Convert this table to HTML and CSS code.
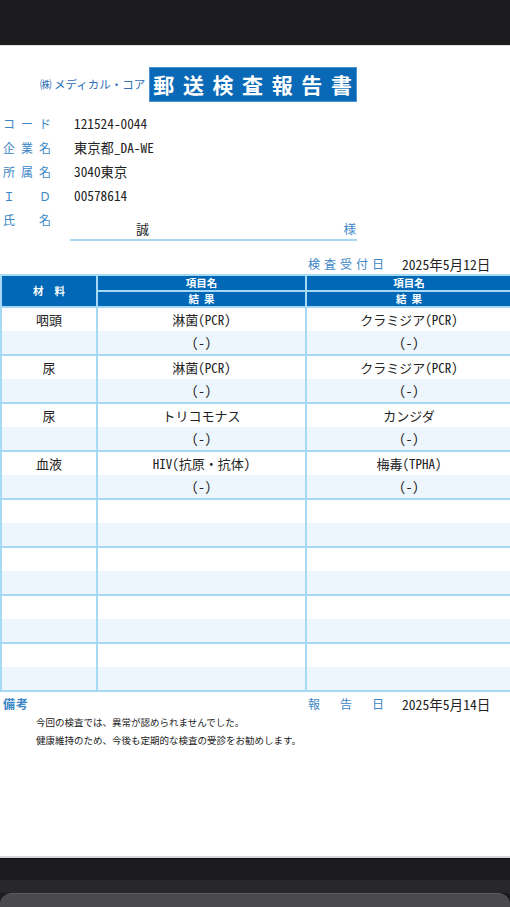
FILE: index.html
```html
<!DOCTYPE html>
<html lang="ja">
<head>
<meta charset="utf-8">
<title>郵送検査報告書</title>
<link rel="stylesheet" href="styles.css">
</head>
<body>
<div class="topbar"></div>
<main class="sheet">
  <div class="brand">
    <span class="company">㈱ メディカル・コア</span>
    <h1 class="title">郵送検査報告書</h1>
  </div>

  <div class="info">
    <div class="info-row"><span class="label">コ ー ド</span><span class="value">121524-0044</span></div>
    <div class="info-row"><span class="label">企 業 名</span><span class="value">東京都_DA-WE</span></div>
    <div class="info-row"><span class="label">所 属 名</span><span class="value">3040東京</span></div>
    <div class="info-row"><span class="label">Ｉ Ｄ</span><span class="value">00578614</span></div>
    <div class="info-row name-row">
      <span class="label">氏 名</span>
      <div class="name-box"><span class="name">誠</span><span class="sama">様</span></div>
    </div>
  </div>

  <div class="date-row">
    <span class="label wide">検 査 受 付 日</span>
    <span class="date">2025年5月12日</span>
  </div>

  <div class="grid">
    <div class="hcell material">材　料</div>
    <div class="hcell">項目名</div>
    <div class="hcell">項目名</div>
    <div class="hcell">結　果</div>
    <div class="hcell">結　果</div>

    <div class="cell"><div class="top">咽頭</div><div class="bot"></div></div>
    <div class="cell"><div class="top">淋菌(PCR)</div><div class="bot">(-)</div></div>
    <div class="cell"><div class="top">クラミジア(PCR)</div><div class="bot">(-)</div></div>

    <div class="cell"><div class="top">尿</div><div class="bot"></div></div>
    <div class="cell"><div class="top">淋菌(PCR)</div><div class="bot">(-)</div></div>
    <div class="cell"><div class="top">クラミジア(PCR)</div><div class="bot">(-)</div></div>

    <div class="cell"><div class="top">尿</div><div class="bot"></div></div>
    <div class="cell"><div class="top">トリコモナス</div><div class="bot">(-)</div></div>
    <div class="cell"><div class="top">カンジダ</div><div class="bot">(-)</div></div>

    <div class="cell"><div class="top">血液</div><div class="bot"></div></div>
    <div class="cell"><div class="top">HIV(抗原・抗体)</div><div class="bot">(-)</div></div>
    <div class="cell"><div class="top">梅毒(TPHA)</div><div class="bot">(-)</div></div>

    <div class="cell"><div class="top"></div><div class="bot"></div></div>
    <div class="cell"><div class="top"></div><div class="bot"></div></div>
    <div class="cell"><div class="top"></div><div class="bot"></div></div>

    <div class="cell"><div class="top"></div><div class="bot"></div></div>
    <div class="cell"><div class="top"></div><div class="bot"></div></div>
    <div class="cell"><div class="top"></div><div class="bot"></div></div>

    <div class="cell"><div class="top"></div><div class="bot"></div></div>
    <div class="cell"><div class="top"></div><div class="bot"></div></div>
    <div class="cell"><div class="top"></div><div class="bot"></div></div>

    <div class="cell"><div class="top"></div><div class="bot"></div></div>
    <div class="cell"><div class="top"></div><div class="bot"></div></div>
    <div class="cell"><div class="top"></div><div class="bot"></div></div>
  </div>

  <div class="footer-row">
    <span class="bikou">備考</span>
    <div class="report">
      <span class="label wide">報 告 日</span>
      <span class="date">2025年5月14日</span>
    </div>
  </div>
  <div class="remarks">
    <p>今回の検査では、異常が認められませんでした。</p>
    <p>健康維持のため、今後も定期的な検査の受診をお勧めします。</p>
  </div>
</main>
<div class="bottombar">
  <div class="band"></div>
  <div class="panel"></div>
</div>
</body>
</html>
```

FILE: styles.css
```css
html, body {
  margin: 0;
  padding: 0;
}
body {
  width: 510px;
  height: 907px;
  overflow: hidden;
  background: #1c1c1e;
  font-family: "Noto Sans CJK JP", "Noto Sans", sans-serif;
  font-feature-settings: "hwid" 1;
  color: #222;
}
.topbar {
  height: 45px;
  background: #1c1c1e;
  border-bottom: 1px solid #e2e2e4;
}
.sheet {
  height: 810px;
  background: #fff;
  overflow: hidden;
}
.brand {
  display: flex;
  align-items: center;
  gap: 4px;
  padding-left: 40px;
  margin-top: 21px;
}
.company {
  font-size: 11.5px;
  color: #2f70b8;
  line-height: 1;
  font-feature-settings: normal;
}
.title {
  margin: 0;
  width: 208px;
  height: 35px;
  box-sizing: border-box;
  background: #0a69b6;
  border: 1px solid #4c92d0;
  color: #fff;
  font-size: 21px;
  font-weight: 700;
  line-height: 33px;
  letter-spacing: 8.6px;
  padding-left: 3px;
  white-space: nowrap;
}
.info {
  margin-top: 10px;
}
.info-row {
  display: flex;
  align-items: flex-start;
  height: 24px;
  line-height: 24px;
}
.label {
  display: inline-block;
  width: 48px;
  margin-left: 3px;
  font-size: 12px;
  color: #3d86c6;
  text-align: justify;
  text-align-last: justify;
  white-space: nowrap;
  font-feature-settings: normal;
}
.value {
  margin-left: 23px;
  font-size: 13.3px;
  color: #222;
}
.name-row {
  height: 32px;
}
.name-box {
  margin-left: 19px;
  width: 220px;
  height: 30px;
  border-bottom: 2px solid #a9d6f0;
  display: flex;
  align-items: flex-end;
  justify-content: space-between;
  padding: 0 1px 1px 66px;
  line-height: 18px;
}
.name {
  font-size: 13px;
  color: #222;
}
.sama {
  font-size: 12.5px;
  color: #3d86c6;
}
.date-row {
  display: flex;
  align-items: center;
  height: 20px;
  margin-top: 14px;
  padding-left: 305px;
  line-height: 20px;
}
.label.wide {
  width: 76px;
  margin-left: 3px;
}
.date {
  margin-left: 18px;
  font-size: 13.6px;
  color: #222;
  white-space: nowrap;
}
.grid {
  width: 513px;
  box-sizing: border-box;
  display: grid;
  grid-template-columns: 94px 207px 204px;
  grid-template-rows: 14px 14px repeat(8, 46px);
  gap: 2px;
  padding: 2px;
  background: #a6d9f3;
}
.hcell {
  background: #0068b7;
  color: #fff;
  font-size: 10.5px;
  font-weight: 700;
  line-height: 14px;
  text-align: center;
}
.hcell.material {
  grid-row: span 2;
  display: flex;
  align-items: center;
  justify-content: center;
  letter-spacing: 3px;
  padding-left: 3px;
}
.cell {
  display: flex;
  flex-direction: column;
  font-size: 13px;
  text-align: center;
}
.cell .top {
  height: 23px;
  line-height: 23px;
  background: #fff;
}
.cell .bot {
  height: 23px;
  line-height: 23px;
  background: #eef6fd;
}
.footer-row {
  display: flex;
  align-items: center;
  justify-content: space-between;
  height: 24px;
  line-height: 24px;
}
.bikou {
  margin-left: 3px;
  font-size: 12px;
  font-weight: 700;
  color: #3d86c6;
  letter-spacing: 1px;
}
.report {
  display: flex;
  align-items: center;
  width: 205px;
}
.remarks {
  margin-top: -3px;
  padding-left: 36px;
}
.remarks p {
  margin: 0;
  font-size: 9.5px;
  line-height: 18px;
  color: #222;
  white-space: nowrap;
}
.bottombar {
  border-top: 2px solid #d6d6d8;
}
.band {
  height: 21px;
  background: #1c1c1e;
  border-top: 1px solid #0c0c0c;
  border-bottom: 13px solid #28282a;
}
.panel {
  height: 20px;
  background: #4a4a4c;
  border-top: 1px solid #5a5a5c;
  border-radius: 12px 12px 0 0;
}
```
